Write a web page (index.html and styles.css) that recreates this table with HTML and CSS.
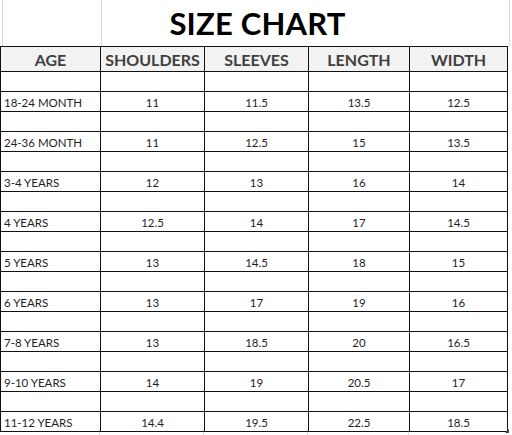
FILE: index.html
```html
<!DOCTYPE html>
<html lang="en">
<head>
<meta charset="utf-8">
<title>Size Chart</title>
<link rel="stylesheet" href="styles.css">
</head>
<body>
<div class="page">
  <div class="title-band">
    <div class="gl gl-first"></div>
    <div class="title">SIZE CHART</div>
    <div class="gl"></div>
  </div>
  <div class="sheet">
    <div class="hd">AGE</div><div class="hd">SHOULDERS</div><div class="hd">SLEEVES</div><div class="hd">LENGTH</div><div class="hd">WIDTH</div>

    <div class="c"></div><div class="c"></div><div class="c"></div><div class="c"></div><div class="c"></div>
    <div class="c age">18-24 MONTH</div><div class="c">11</div><div class="c">11.5</div><div class="c">13.5</div><div class="c">12.5</div>

    <div class="c"></div><div class="c"></div><div class="c"></div><div class="c"></div><div class="c"></div>
    <div class="c age">24-36 MONTH</div><div class="c">11</div><div class="c">12.5</div><div class="c">15</div><div class="c">13.5</div>

    <div class="c"></div><div class="c"></div><div class="c"></div><div class="c"></div><div class="c"></div>
    <div class="c age">3-4 YEARS</div><div class="c">12</div><div class="c">13</div><div class="c">16</div><div class="c">14</div>

    <div class="c"></div><div class="c"></div><div class="c"></div><div class="c"></div><div class="c"></div>
    <div class="c age">4 YEARS</div><div class="c">12.5</div><div class="c">14</div><div class="c">17</div><div class="c">14.5</div>

    <div class="c"></div><div class="c"></div><div class="c"></div><div class="c"></div><div class="c"></div>
    <div class="c age">5 YEARS</div><div class="c">13</div><div class="c">14.5</div><div class="c">18</div><div class="c">15</div>

    <div class="c"></div><div class="c"></div><div class="c"></div><div class="c"></div><div class="c"></div>
    <div class="c age">6 YEARS</div><div class="c">13</div><div class="c">17</div><div class="c">19</div><div class="c">16</div>

    <div class="c"></div><div class="c"></div><div class="c"></div><div class="c"></div><div class="c"></div>
    <div class="c age">7-8 YEARS</div><div class="c">13</div><div class="c">18.5</div><div class="c">20</div><div class="c">16.5</div>

    <div class="c"></div><div class="c"></div><div class="c"></div><div class="c"></div><div class="c"></div>
    <div class="c age">9-10 YEARS</div><div class="c">14</div><div class="c">19</div><div class="c">20.5</div><div class="c">17</div>

    <div class="c"></div><div class="c"></div><div class="c"></div><div class="c"></div><div class="c"></div>
    <div class="c age">11-12 YEARS</div><div class="c">14.4</div><div class="c">19.5</div><div class="c">22.5</div><div class="c sel">18.5<span class="handle"></span></div>
  </div>
  <div class="foot-band">
    <div class="fg"></div><div class="fg"></div><div class="fg"></div><div class="fg"></div><div class="fg"></div>
  </div>
</div>
</body>
</html>
```
FILE: styles.css
```css
html, body {
  margin: 0;
  padding: 0;
  background: #ffffff;
}
body {
  font-family: Lato, "Open Sans", "Liberation Sans", sans-serif;
}
.page {
  width: 512px;
}
.title-band {
  display: grid;
  grid-template-columns: 100px 309px 98px;
  height: 46px;
  box-sizing: border-box;
  border-left: 1px solid #dcdcdc;
  margin-left: 2px;
  width: 506px;
}
.gl {
  border-right: 1px solid #dcdcdc;
}
.gl-first {
  width: 98px;
}
.title {
  font-weight: 700;
  font-size: 31px;
  line-height: 46px;
  color: #000;
  text-align: center;
  letter-spacing: 0.2px;
}
.sheet {
  display: grid;
  grid-template-columns: 100px 104px 104px 101px 98px;
  grid-auto-rows: 20px;
  width: 508px;
  box-sizing: border-box;
  border-left: 1px solid #111;
  border-top: 1px solid #111;
}
.sheet > div {
  box-sizing: border-box;
  border-right: 1px solid #111;
  border-bottom: 1px solid #111;
}
.hd {
  height: 25px;
  background: #f2f2f2;
  color: #404040;
  font-weight: 700;
  font-size: 16px;
  line-height: 16px;
  display: flex;
  align-items: flex-end;
  justify-content: center;
  padding-bottom: 3px;
}
.sheet > .hd {
  grid-row: 1;
}
.sheet {
  grid-template-rows: 25px;
}
.c {
  font-size: 11.5px;
  line-height: 12px;
  color: #1e1e1e;
  display: flex;
  align-items: flex-end;
  justify-content: center;
  padding-bottom: 2px;
}
.c.age {
  justify-content: flex-start;
  padding-left: 3px;
}
.sel {
  position: relative;
}
.handle {
  position: absolute;
  right: -2px;
  bottom: -2px;
  width: 0;
  height: 0;
  border-left: 4px solid transparent;
  border-bottom: 4px solid #3b4a7a;
}
.foot-band {
  display: grid;
  grid-template-columns: 100px 104px 104px 101px 98px;
  height: 4px;
  width: 508px;
}
.fg {
  border-right: 1px solid #dcdcdc;
}
```
